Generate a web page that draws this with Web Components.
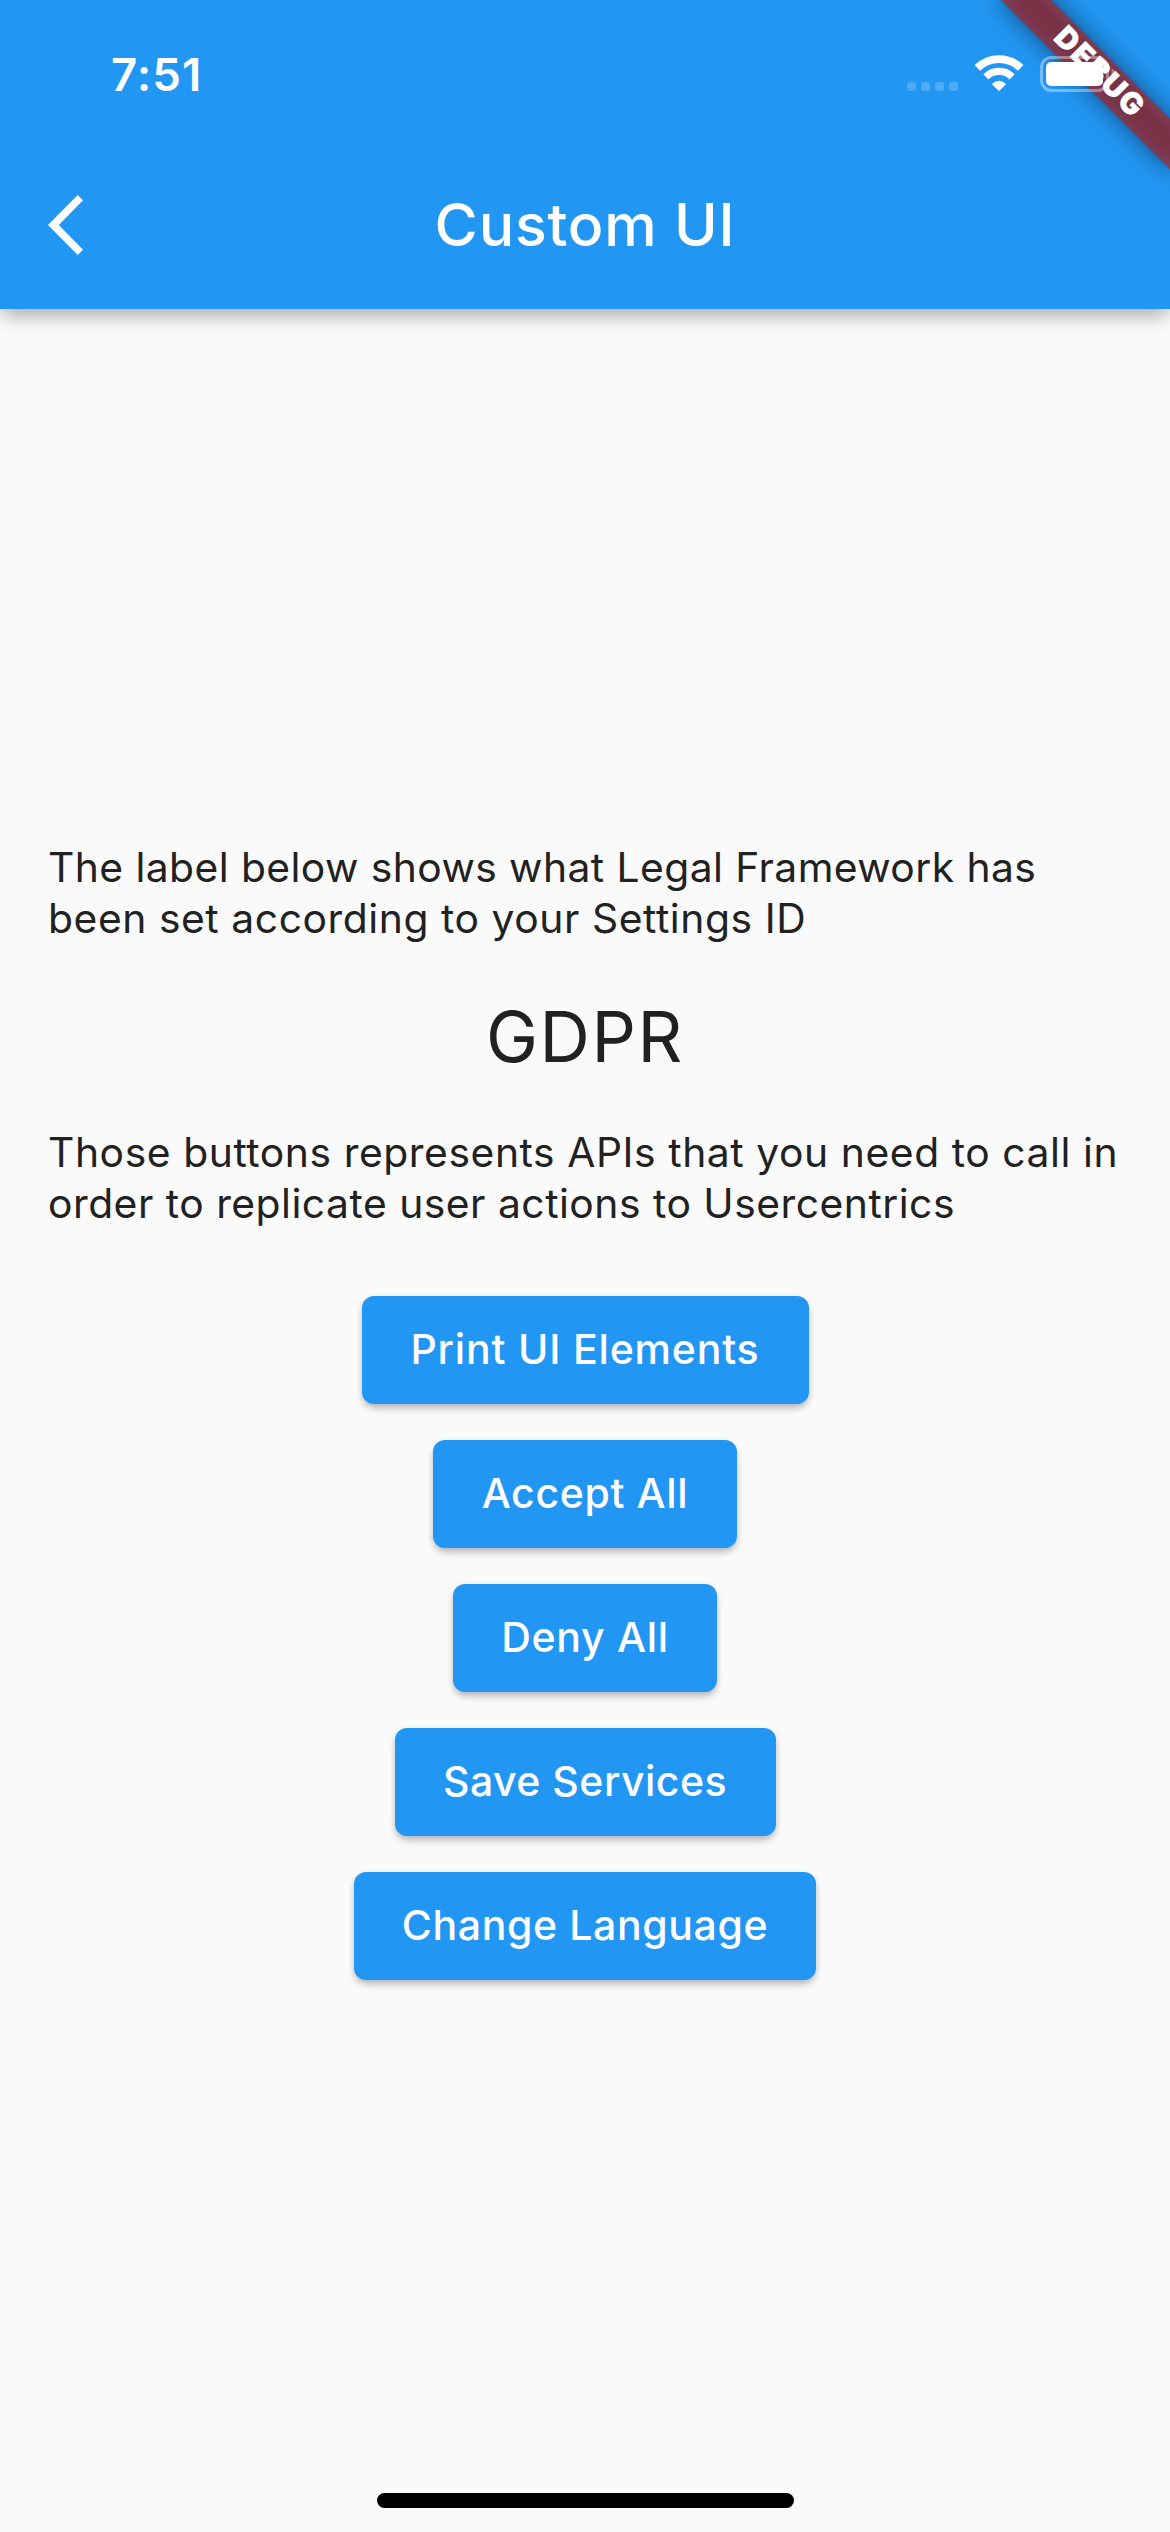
<!DOCTYPE html>
<html lang="en">
<head>
<meta charset="utf-8">
<title>Custom UI</title>
<style>
html, body { margin: 0; padding: 0; }
body { width: 1170px; height: 2532px; overflow: hidden; font-family: Inter, "Liberation Sans", sans-serif; }
</style>
</head>
<body>
<app-screen>
  <status-bar slot="status">7:51</status-bar>
  <app-bar slot="bar">Custom UI</app-bar>
  <body-text style="--track:.43px">The label below shows what Legal Framework has<br><span style="letter-spacing:.56px">been set according to your Settings ID</span></body-text>
  <framework-label>GDPR</framework-label>
  <body-text style="--track:.57px">Those buttons represents APIs that you need to call in<br><span style="letter-spacing:.5px">order to replicate user actions to Usercentrics</span></body-text>
  <button-column>
    <raised-button style="--w:447px;--track:.83px">Print UI Elements</raised-button>
    <raised-button style="--w:303.4px;--track:.64px">Accept All</raised-button>
    <raised-button style="--w:264px;--track:.72px">Deny All</raised-button>
    <raised-button style="--w:381px;--track:.5px">Save Services</raised-button>
    <raised-button style="--w:462px;--track:.63px">Change Language</raised-button>
  </button-column>
  <home-indicator slot="home"></home-indicator>
  <debug-banner slot="banner">DEBUG</debug-banner>
</app-screen>
<script>
const define = (name, html) => customElements.define(name, class extends HTMLElement {
  constructor() {
    super();
    this.attachShadow({ mode: 'open' }).innerHTML = html;
  }
});

define('app-screen', `
<style>
:host { display: flex; flex-direction: column; position: relative; width: 1170px; height: 2532px; overflow: hidden; background: #fafafa; color: #212121; }
header { flex: none; height: 309px; background: #2196f3; box-shadow: 0 12px 18px -4px rgba(0,0,0,.21), 0 4px 18px rgba(0,0,0,.13); }
main { flex: 1; display: flex; flex-direction: column; gap: 48px; padding: 533px 48px 0; }
</style>
<header><slot name="status"></slot><slot name="bar"></slot></header>
<main><slot></slot></main>
<slot name="home"></slot>
<slot name="banner"></slot>`);

define('status-bar', `
<style>
:host { display: flex; justify-content: space-between; align-items: flex-start; height: 141px; box-sizing: border-box; padding: 50px 50px 0 111px; color: #fff; }
.time { font-size: 45.5px; line-height: 49px; font-weight: 600; letter-spacing: 1.05px; }
svg { display: block; position: relative; z-index: 3; }
</style>
<span class="time"><slot></slot></span>
<svg width="220" height="46" viewBox="900 50 220 46">
  <g fill="#fff" fill-opacity=".2">
    <rect x="907" y="82" width="9" height="9" rx="3"/><rect x="921" y="82" width="9" height="9" rx="3"/>
    <rect x="935" y="82" width="9" height="9" rx="3"/><rect x="949" y="82" width="9" height="9" rx="3"/>
  </g>
  <g fill="none" stroke="#fff">
    <path d="M977.3 67.9A31.2 31.2 0 0 1 1020.7 67.9" stroke-width="7.8"/>
    <path d="M985.9 76.9A18.5 18.5 0 0 1 1012.1 76.9" stroke-width="7.2"/>
  </g>
  <path d="M999 90L993 84.1Q999 79.2 1005 84.1Z" fill="#fff" stroke="#fff" stroke-width="1.6" stroke-linejoin="round"/>
  <rect x="1041.5" y="57.5" width="66" height="33" rx="10" fill="none" stroke="#fff" stroke-opacity=".38" stroke-width="3"/>
  <rect x="1046" y="62" width="57" height="24" rx="5" fill="#fff"/>
  <path d="M1111.5 68.5Q1115.500 70 1115.500 74T1111.500 79.500Z" fill="#fff" fill-opacity=".38"/>
</svg>`);

define('app-bar', `
<style>
:host { display: grid; grid-template-columns: 168px 1fr 168px; align-items: center; height: 168px; color: #fff; }
svg { display: block; margin-left: 48px; }
h1 { margin: 0; text-align: center; font-size: 59px; line-height: 72px; font-weight: 500; letter-spacing: .81px; }
</style>
<svg width="35" height="60" viewBox="0 0 35 60"><path d="M29.7 0L35 5.3L10.8 30L35 54.7L29.7 60L0 30Z" fill="#fff"/></svg>
<h1><slot></slot></h1>`);

define('body-text', `
<style>
:host { display: block; font-size: 40.8px; line-height: 51px; letter-spacing: var(--track, .5px); white-space: nowrap; }
</style><slot></slot>`);

define('framework-label', `
<style>
:host { display: block; height: 87px; box-sizing: border-box; padding-top: 1px; text-align: center; font-size: 69.7px; line-height: 87px; letter-spacing: 1.6px; }
</style><slot></slot>`);

define('button-column', `
<style>
:host { display: flex; flex-direction: column; align-items: center; gap: 36px; padding-top: 19px; }
</style><slot></slot>`);

define('raised-button', `
<style>
:host { display: block; width: var(--w); }
button { display: block; width: 100%; height: 108px; box-sizing: border-box; margin: 0; padding: 0 0 1px; border: 0; border-radius: 12px; background: #2196f3; color: #fff;
  font: 500 41px/51px Inter, "Liberation Sans", sans-serif; letter-spacing: var(--track); white-space: nowrap;
  box-shadow: 0 6px 8px -2px rgba(0,0,0,.2), 0 2px 6px rgba(0,0,0,.14); }
</style><button><slot></slot></button>`);

define('home-indicator', `
<style>
:host { display: block; flex: none; width: 417px; height: 15px; margin: 0 0 24px 377px; border-radius: 7.5px; background: #000; }
</style>`);

/* Corner ribbon laid across the top right of the screen. */
define('debug-banner', `
<style>
:host { position: absolute; z-index: 2; left: 977.9px; top: 54.1px; width: 240px; height: 36px; transform: rotate(45deg); }
.shadow, .band { position: absolute; inset: 0; }
.shadow { background: rgba(0,0,0,.5); filter: blur(12px); }
.band { background: rgba(183,28,28,.627); color: #fff; text-align: center; font-size: 30px; line-height: 33px; font-weight: 900; letter-spacing: 2px; text-indent: 3px; -webkit-text-stroke: .4px #fff; }
</style><div class="shadow"></div><div class="band"><slot></slot></div>`);
</script>
</body>
</html>
